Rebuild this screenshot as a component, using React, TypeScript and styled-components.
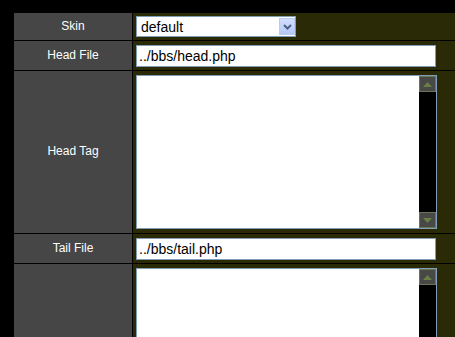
import React from 'react';
import styled, { createGlobalStyle } from 'styled-components';

const GlobalStyle = createGlobalStyle`
	html, body {
		margin: 0;
		padding: 0;
		background: #000;
		overflow: hidden;
	}
	body {
		font-family: "Liberation Sans", Arial, sans-serif;
	}
`;

const Page = styled.div`
	padding: 12px 0 0 13px;
`;

const Table = styled.div`
	display: grid;
	grid-template-columns: 118px 1fr;
	gap: 1px;
	padding: 1px 0 0 1px;
	width: 442px;
	box-sizing: border-box;
	background: #000;
`;

const Label = styled.div<{ h: number }>`
	box-sizing: border-box;
	height: ${({ h }) => `${h}px`};
	padding-bottom: 2px;
	background: #464646;
	color: #fff;
	font-size: 12px;
	display: flex;
	align-items: center;
	justify-content: center;
`;

const Value = styled.div<{ h: number; padTop: number }>`
	box-sizing: border-box;
	height: ${({ h }) => `${h}px`};
	padding: ${({ padTop }) => `${padTop}px 0 0 3px`};
	background: #2a2a06;
	overflow: hidden;
`;

const SelectBox = styled.div`
	box-sizing: border-box;
	display: flex;
	width: 160px;
	height: 21px;
	border: 1px solid #7f9db9;
	background: #fff;
`;

const Select = styled.select`
	flex: 1;
	appearance: none;
	border: none;
	outline: none;
	background: transparent;
	font-family: "Liberation Sans", Arial, sans-serif;
	font-size: 14px;
	color: #000;
	padding: 0 0 0 4px;
	margin: 0;
`;

const ArrowButton = styled.div`
	box-sizing: border-box;
	width: 16px;
	margin: 1px 0 1px 0;
	border: 1px solid #b9cbf3;
	background: linear-gradient(#d2defd, #b4c8f8);
	display: flex;
	align-items: center;
	justify-content: center;
`;

const TextInput = styled.input`
	box-sizing: border-box;
	display: block;
	width: 300px;
	height: 22px;
	border: 1px solid #7f9db9;
	padding: 0 0 0 2px;
	margin: 0;
	font-family: "Liberation Sans", Arial, sans-serif;
	font-size: 14px;
	color: #000;
	background: #fff;
	outline: none;
`;

const Frame = styled.div`
	box-sizing: border-box;
	display: flex;
	width: 301px;
	height: 154px;
	border: 1px solid #7f9db9;
	background: #fff;
`;

const TextArea = styled.textarea`
	flex: 1;
	border: none;
	outline: none;
	resize: none;
	margin: 0;
	padding: 2px;
	font-family: "Liberation Sans", Arial, sans-serif;
	font-size: 14px;
	overflow: hidden;
`;

const ScrollTrack = styled.div`
	width: 17px;
	background: #000;
	display: flex;
	flex-direction: column;
	justify-content: space-between;
`;

const ScrollButton = styled.div`
	box-sizing: border-box;
	width: 17px;
	height: 16px;
	border: 1px solid #6a7651;
	background: #484846;
	display: flex;
	align-items: center;
	justify-content: center;
`;

function Chevron() {
	return (
		<svg width="9" height="6" viewBox="0 0 9 6">
			<path d="M1 1 L4.5 4.5 L8 1" fill="none" stroke="#4d6185" strokeWidth="2" />
		</svg>
	);
}

function Triangle({ down }: { down?: boolean }) {
	return (
		<svg width="9" height="5" viewBox="0 0 9 5">
			<polygon points={down ? '0,0 9,0 4.5,5' : '0,5 9,5 4.5,0'} fill="#6b7f45" />
		</svg>
	);
}

function TextBox() {
	return (
		<Frame>
			<TextArea />
			<ScrollTrack>
				<ScrollButton><Triangle /></ScrollButton>
				<ScrollButton><Triangle down /></ScrollButton>
			</ScrollTrack>
		</Frame>
	);
}

function App() {
	return (
		<>
			<GlobalStyle />
			<Page>
				<Table>
					<Label h={27}>Skin</Label>
					<Value h={27} padTop={3}>
						<SelectBox>
							<Select defaultValue="default">
								<option value="default">default</option>
							</Select>
							<ArrowButton><Chevron /></ArrowButton>
						</SelectBox>
					</Value>

					<Label h={29}>Head File</Label>
					<Value h={29} padTop={4}>
						<TextInput defaultValue="../bbs/head.php" />
					</Value>

					<Label h={162}>Head Tag</Label>
					<Value h={162} padTop={4}>
						<TextBox />
					</Value>

					<Label h={29}>Tail File</Label>
					<Value h={29} padTop={4}>
						<TextInput defaultValue="../bbs/tail.php" />
					</Value>

					<Label h={73} />
					<Value h={73} padTop={4}>
						<TextBox />
					</Value>
				</Table>
			</Page>
		</>
	);
}

export default App;
